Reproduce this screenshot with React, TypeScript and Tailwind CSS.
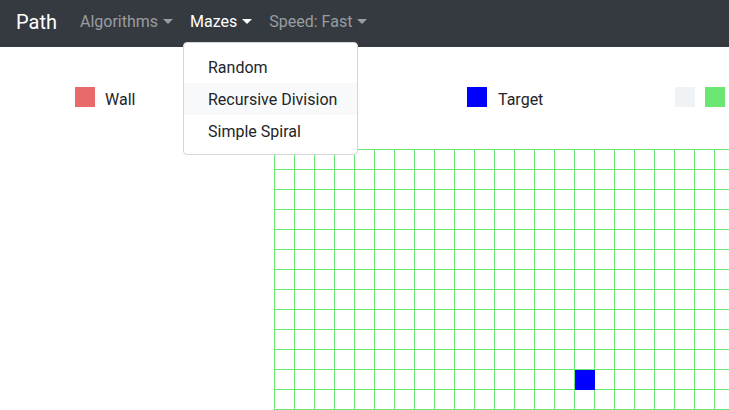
import React from "react";

const COLS = 24;
const ROWS = 14;

function Caret({ color }: { color: string }) {
  return (
    <span
      className={`inline-block ml-[5px] w-0 h-0 border-l-[5px] border-r-[5px] border-t-[5px] border-l-transparent border-r-transparent ${color}`}
    />
  );
}

export default function App() {
  const rows = Array.from({ length: ROWS });
  const cols = Array.from({ length: COLS });
  return (
    <div className="relative w-[729px] h-[410px] overflow-hidden bg-white font-['Roboto',sans-serif] text-[#212529]">
      <nav className="h-[47px] bg-[#343a40] flex items-center pl-[16px] pb-[4px] whitespace-nowrap">
        <span className="text-white text-[20px] leading-[30px] mr-[15px]">Path</span>
        <span className="flex items-center px-[8px] text-[16px] text-[#9a9da0]">
          Algorithms
          <Caret color="border-t-[#9a9da0]" />
        </span>
        <span className="flex items-center pl-[9px] pr-[8px] text-[16px] text-white">
          Mazes
          <Caret color="border-t-white" />
        </span>
        <span className="flex items-center pl-[9px] pr-[8px] text-[16px] text-[#9a9da0]">
          Speed: Fast
          <Caret color="border-t-[#9a9da0]" />
        </span>
      </nav>

      <div className="mt-[40px] h-[20px] flex items-center pl-[75px] text-[16px] whitespace-nowrap">
        <div className="w-[392px] shrink-0 flex items-center">
          <span className="w-[20px] h-[20px] bg-[#e96a6a]" />
          <span className="ml-[10px] pt-[5px]">Wall</span>
        </div>
        <div className="w-[208px] shrink-0 flex items-center">
          <span className="w-[20px] h-[20px] bg-[#0000ff]" />
          <span className="ml-[11px] pt-[5px]">Target</span>
        </div>
        <div className="shrink-0 flex items-center">
          <span className="w-[20px] h-[20px] bg-[#eff3f6]" />
          <span className="ml-[10px] w-[20px] h-[20px] bg-[#6be672]" />
        </div>
      </div>

      <div className="mt-[42px] ml-[274px] w-max border-l border-t border-[#6be672]">
        {rows.map((_, r) => (
          <div key={r} className="flex">
            {cols.map((_, c) => {
              const target = r === 11 && c === 15;
              return (
                <div
                  key={c}
                  className={`w-[20px] h-[20px] border-r border-b ${
                    target ? "bg-[#0000ff] border-[#0000ff]" : "border-[#6be672]"
                  }`}
                />
              );
            })}
          </div>
        ))}
      </div>

      <div className="absolute left-[183px] top-[42px] w-[175px] h-[113px] bg-white border border-[#d6d6d6] rounded-[4px] pt-[8px] text-[16px] text-[#212529] whitespace-nowrap">
        <div className="h-[32px] leading-[32px] px-[24px] pt-[1px]">Random</div>
        <div className="h-[32px] leading-[32px] px-[24px] pt-[1px] bg-[#f8f9fa]">Recursive Division</div>
        <div className="h-[32px] leading-[32px] px-[24px] pt-[1px]">Simple Spiral</div>
      </div>
    </div>
  );
}
